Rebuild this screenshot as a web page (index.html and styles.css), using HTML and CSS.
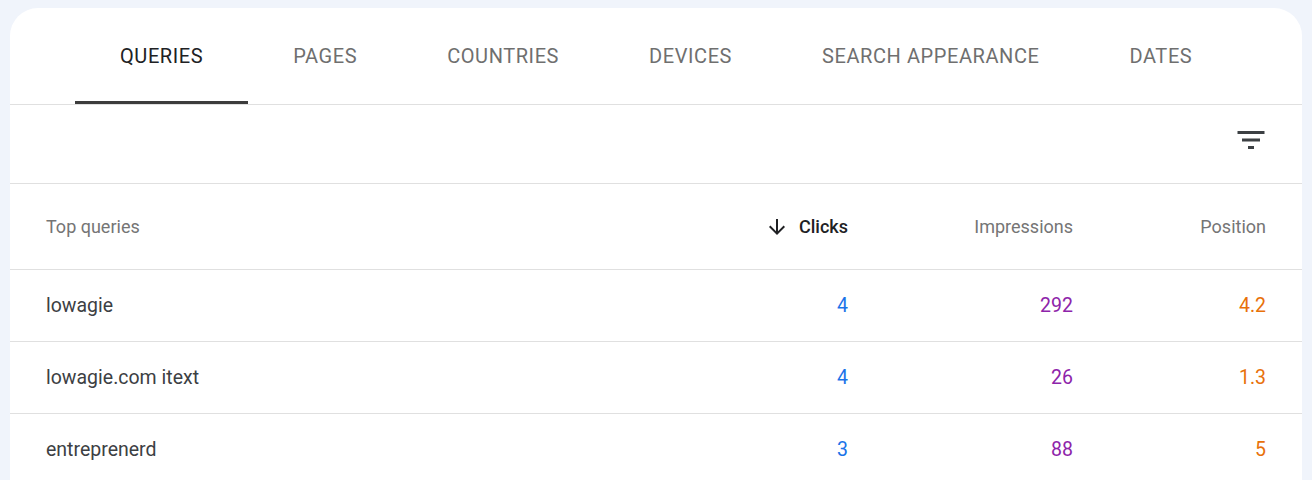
FILE: index.html
```html
<!DOCTYPE html>
<html>
<head>
<meta charset="utf-8">
<link rel="stylesheet" href="styles.css">
</head>
<body>
<div class="card">
  <nav class="tabs">
    <div class="tab active">QUERIES</div>
    <div class="tab">PAGES</div>
    <div class="tab">COUNTRIES</div>
    <div class="tab">DEVICES</div>
    <div class="tab">SEARCH APPEARANCE</div>
    <div class="tab">DATES</div>
  </nav>
  <div class="toolbar">
    <svg class="filter-icon" viewBox="0 0 24 24" width="36" height="36"><path d="M10 18h4v-2h-4v2zM3 6v2h18V6H3zm3 7h12v-2H6v2z" fill="#3c4043"/></svg>
  </div>
  <div class="table">
    <div class="row head">
      <div class="cell name">Top queries</div>
      <div class="cell num sorted"><svg class="arrow" viewBox="0 0 24 24" width="24" height="24"><path d="M20 12l-1.41-1.41L13 16.17V4h-2v12.17l-5.58-5.59L4 12l8 8 8-8z" fill="#202124"/></svg>Clicks</div>
      <div class="cell num">Impressions</div>
      <div class="cell num">Position</div>
    </div>
    <div class="row">
      <div class="cell name">lowagie</div>
      <div class="cell num clicks">4</div>
      <div class="cell num impr">292</div>
      <div class="cell num pos">4.2</div>
    </div>
    <div class="row">
      <div class="cell name">lowagie.com itext</div>
      <div class="cell num clicks">4</div>
      <div class="cell num impr">26</div>
      <div class="cell num pos">1.3</div>
    </div>
    <div class="row">
      <div class="cell name">entreprenerd</div>
      <div class="cell num clicks">3</div>
      <div class="cell num impr">88</div>
      <div class="cell num pos">5</div>
    </div>
  </div>
</div>
</body>
</html>
```

FILE: styles.css
```css
html, body {
  margin: 0;
  padding: 0;
  background: #f0f4fb;
  font-family: Roboto, "Liberation Sans", sans-serif;
}
body {
  padding: 8px 10px 0 10px;
  height: 480px;
  box-sizing: border-box;
  overflow: hidden;
}
.card {
  background: #ffffff;
  border-radius: 28px 28px 0 0;
  height: 472px;
  overflow: hidden;
}
.tabs {
  display: flex;
  padding-left: 65px;
  height: 96px;
  border-bottom: 1px solid #e0e0e0;
}
.tab {
  display: flex;
  align-items: center;
  padding: 0 45px;
  font-size: 20px;
  color: #6f6f6f;
  letter-spacing: 0.58px;
  box-sizing: border-box;
  border-bottom: 3px solid transparent;
  padding-top: 3px;
}
.tab.active {
  color: #202124;
  border-bottom-color: #3c3c3c;
}
.toolbar {
  height: 79px;
  display: flex;
  justify-content: flex-end;
  align-items: flex-start;
  padding: 17px 33px 0 0;
  box-sizing: border-box;
  border-bottom: 1px solid #e0e0e0;
}
.filter-icon {
  display: block;
}
.row {
  display: grid;
  grid-template-columns: 1fr 200px 225px 193px;
  padding: 0 36px;
  height: 72px;
  box-sizing: border-box;
  align-items: center;
  border-bottom: 1px solid #e0e0e0;
  font-size: 19.5px;
  color: #3c4043;
}
.row.head {
  height: 86px;
  font-size: 18px;
  color: #757575;
}
.cell.num {
  text-align: right;
}
.sorted {
  display: flex;
  justify-content: flex-end;
  align-items: center;
  color: #202124;
  font-weight: 500;
}
.arrow {
  margin-right: 10px;
}
.clicks { color: #1a73e8; }
.impr { color: #8e24aa; }
.pos { color: #e8710a; }
```
